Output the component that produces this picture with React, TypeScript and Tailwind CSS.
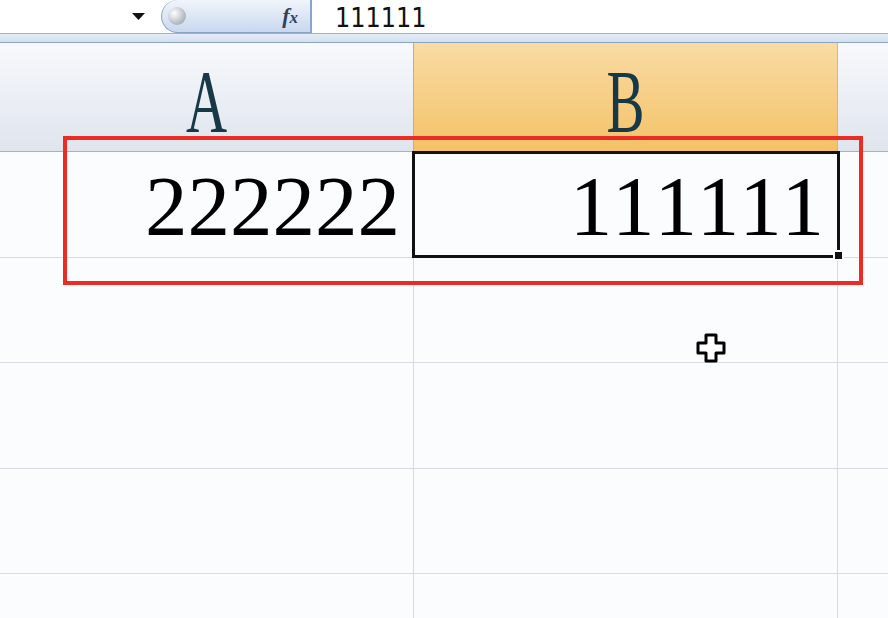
import React from "react";

const SERIF = "font-['Liberation_Serif','Times_New_Roman',serif]";

function PlusCursor() {
  return (
    <svg width="32" height="32" viewBox="0 0 32 32" className="absolute left-[695px] top-[332px]">
      <path
        d="M11 3 H21 V11 H29 V21 H21 V29 H11 V21 H3 V11 H11 Z"
        fill="#fff"
        stroke="#000"
        strokeWidth="3"
        strokeLinejoin="round"
      />
    </svg>
  );
}

function Header({ label, active }: { label: string; active?: boolean }) {
  return (
    <div
      className={
        "flex h-[109px] items-end justify-center border-b border-r pb-[6px] " +
        (active
          ? "border-[#e8b45c] bg-gradient-to-b from-[#f9dba4] to-[#f3c265]"
          : "border-[#9eb3cc] bg-gradient-to-b from-[#f8f9fc] to-[#dfe5ee]")
      }
    >
      <span
        className={`${SERIF} inline-block origin-bottom scale-y-[1.55] text-[57px] leading-none text-[#173847]`}
      >
        {label}
      </span>
    </div>
  );
}

function Cell({ value, wide }: { value?: string; wide?: boolean }) {
  return (
    <div
      className={
        "flex h-[105.5px] items-start justify-end border-b border-r border-[#d5dbe7] pt-[12px] " +
        (wide ? "pr-[10px]" : "pr-[13px]")
      }
    >
      {value && (
        <span
          className={`${SERIF} text-[85px] leading-none text-black ${wide ? "tracking-[3px]" : ""}`}
        >
          {value}
        </span>
      )}
    </div>
  );
}

export default function App() {
  const rows = [["222222", "111111"], [], [], [], []];
  return (
    <div className="relative h-[618px] w-[888px] overflow-hidden bg-[#fbfcfe]">
      {/* formula bar */}
      <div className="flex h-[34px] items-stretch border-b border-[#9bb0c9] bg-white">
        <div className="flex w-[161px] items-center justify-end pr-[16px]">
          <svg width="13" height="7" viewBox="0 0 13 7">
            <path d="M0 0 H13 L6.5 7 Z" fill="#111" />
          </svg>
        </div>
        <div className="flex w-[151px] items-center justify-between rounded-l-[17px] border border-r-2 border-t-0 border-[#8aa5c8] bg-gradient-to-b from-[#f1f5fb] to-[#c8d8ee] pl-[6px] pr-[12px]">
          <span className="h-[18px] w-[18px] rounded-full bg-[radial-gradient(circle_at_35%_35%,#ffffff,#b9bec6_60%,#8e959f)]" />
          <span className={`${SERIF} text-[22px] font-bold italic leading-none text-[#34405a]`}>
            f<span className="text-[17px]">x</span>
          </span>
        </div>
        <div className="flex items-center pl-[23px] pt-[2px] font-['DejaVu_Sans',sans-serif] text-[24px] leading-none text-[#111]">
          <span className="inline-block scale-y-[1.12]">111111</span>
        </div>
      </div>
      <div className="h-[9px] border-b border-[#8ea3bf] bg-gradient-to-b from-[#e4ecf7] to-[#d3dff0]" />

      {/* grid */}
      <div className="grid grid-cols-[414px_424px_1fr]">
        <Header label="A" />
        <Header label="B" active />
        <div className="h-[109px] border-b border-[#9eb3cc] bg-gradient-to-b from-[#f8f9fc] to-[#dfe5ee]" />
        {rows.map((r, i) => (
          <React.Fragment key={i}>
            <Cell value={r[0]} />
            <Cell value={r[1]} wide />
            <div className="h-[105.5px] border-b border-[#d5dbe7]" />
          </React.Fragment>
        ))}
      </div>

      {/* active cell */}
      <div className="absolute left-[412px] top-[151px] h-[107px] w-[428px] border-[3px] border-[#111]" />
      <div className="absolute left-[833px] top-[250px] h-[11px] w-[11px] border-2 border-[#fbfcfe] bg-[#111]" />

      {/* annotation */}
      <div className="absolute left-[63px] top-[136px] h-[149px] w-[800px] border-4 border-[#ea2c25]" />

      <PlusCursor />
    </div>
  );
}
